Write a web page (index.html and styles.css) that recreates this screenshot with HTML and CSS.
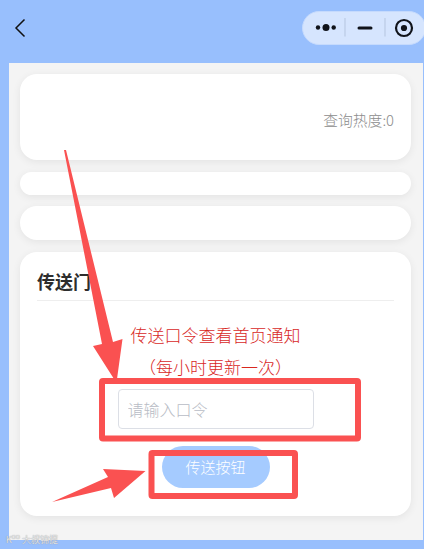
FILE: index.html
```html
<!DOCTYPE html>
<html lang="zh-CN">

<head>
    <meta charset="UTF-8">
    <meta name="viewport" content="width=device-width, initial-scale=1.0">
    <title>传送门</title>
    <link rel="stylesheet" href="styles.css">
</head>

<body>
    <header class="navbar">
        <button class="back" aria-label="返回">
            <svg width="12" height="20" viewBox="0 0 12 20">
                <path d="M10.5 1.5 L2 10 L10.5 18.5" />
            </svg>
        </button>
        <div class="capsule">
            <svg width="124" height="34" viewBox="0 0 124 34">
                <circle cx="16" cy="16.500" r="2.2" />
                <circle cx="24" cy="16.500" r="3.5" />
                <circle cx="31.7" cy="16.500" r="2.2" />
                <path class="divider" d="M43 7 V25.500 M83 7 V25.500" />
                <path class="minus" d="M57 17 H69" />
                <circle class="ring" cx="102" cy="17" r="8" />
                <circle cx="102" cy="17" r="3.1" />
            </svg>
        </div>
    </header>

    <main class="page">
        <section class="card card-heat">查询热度:0</section>
        <section class="card card-thin"></section>
        <section class="card card-empty"></section>
        <section class="card card-portal">
            <h2 class="title">传送门</h2>
            <div class="notice">
                <p>传送口令查看首页通知</p>
                <p>（每小时更新一次）</p>
            </div>
            <input class="code-input" type="text" placeholder="请输入口令">
            <button class="submit">传送按钮</button>
        </section>
    </main>

    <svg class="marks" width="426" height="549" viewBox="0 0 426 549">
        <path d="M64 150 L66 150 L113 342 L122.500 339 L117 379 L114 379 L93 346 L102 344 Z" />
        <path d="M52 502 L108 477 L103 469 L145.500 471 L114 498 L111 488 Z" />
        <rect x="102" y="381" width="256" height="57.500" rx="1" />
        <rect x="151.500" y="453" width="143.500" height="43" rx="1" />
    </svg>
    <div class="watermark">K<sup>oo</sup> 大叔锦提</div>
</body>

</html>
```

FILE: styles.css
```css
* {
    box-sizing: border-box;
}

html {
    background-color: #fff;
    overflow: hidden;
}

body {
    margin: 0;
    width: 424px;
    height: 549px;
    overflow: hidden;
    background-color: #98bffd;
    font-family: 'Noto Sans CJK SC', sans-serif;
    font-weight: 300;
}

button {
    border: none;
    padding: 0;
    font-family: inherit;
    font-weight: inherit;
}

.navbar {
    height: 63px;
    padding: 11px 0 0 14px;
    display: flex;
    justify-content: space-between;
    align-items: flex-start;
}

.back {
    height: 34px;
    background: none;
}

.back svg {
    display: block;
    fill: none;
    stroke: #111;
    stroke-width: 1.5;
}

.capsule {
    width: 124px;
    height: 34px;
    margin-right: -2px;
    flex-shrink: 0;
    border: 1px solid #c5dafd;
    border-radius: 17px;
    background-color: #d6e5fe;
}

.capsule svg {
    display: block;
    margin: -1px;
    fill: #10131a;
}

.capsule .divider {
    stroke: #b5c5df;
}

.capsule .minus {
    stroke: #10131a;
    stroke-width: 3;
    stroke-linecap: round;
}

.capsule .ring {
    fill: none;
    stroke: #10131a;
    stroke-width: 2.2;
}

.page {
    width: 414px;
    height: 477px;
    margin-left: 9px;
    padding: 11px 12px 0 11px;
    background-color: #f4f4f4;
}

.card {
    border-radius: 17px;
    background-color: #fff;
    box-shadow: 0 2px 8px rgba(0, 0, 0, 0.07);
    margin-bottom: 12px;
}

.card-heat {
    height: 86px;
    padding: 35px 17px 0;
    color: #8c8c8c;
    font-size: 14.8px;
    line-height: 22px;
    text-align: right;
}

.card-thin {
    height: 23px;
    margin-bottom: 11px;
}

.card-empty {
    height: 34px;
}

.card-portal {
    height: 264px;
    padding: 16px 17px 0;
    display: flex;
    flex-direction: column;
    align-items: center;
}

.title {
    width: 100%;
    height: 33px;
    margin: 0;
    border-bottom: 1px solid #eee;
    color: #2d2d2d;
    font-size: 18px;
    line-height: 26px;
}

.notice {
    margin-top: 18px;
    color: #d8281f;
    font-size: 17px;
    line-height: 32px;
}

.notice p {
    margin: 0;
    text-align: center;
}

.code-input {
    width: 196px;
    height: 40px;
    margin-top: 6px;
    padding: 0 9px;
    border: 1px solid #dcdfe6;
    border-radius: 4px;
    font-family: inherit;
    font-size: 16px;
    font-weight: inherit;
}

.code-input::placeholder {
    color: #b8bcc5;
}

.submit {
    width: 108px;
    height: 42px;
    margin-top: 17px;
    padding-bottom: 2px;
    border-radius: 21px;
    background-color: #a5cbff;
    color: #fff;
    font-size: 15px;
}

/* red arrows and frames over the form */
.marks {
    position: absolute;
    top: 0;
    left: 0;
    fill: #fa5151;
    pointer-events: none;
}

.marks rect {
    fill: none;
    stroke: #fa5151;
    stroke-width: 6;
}

.watermark {
    position: absolute;
    left: 6px;
    bottom: 2px;
    color: #f2f4f7;
    font-size: 9px;
    line-height: 14px;
    text-shadow: 0 0 1px #999, 0 0 1px #999;
}

.watermark sup {
    font-size: 7px;
    line-height: 0;
}
```
